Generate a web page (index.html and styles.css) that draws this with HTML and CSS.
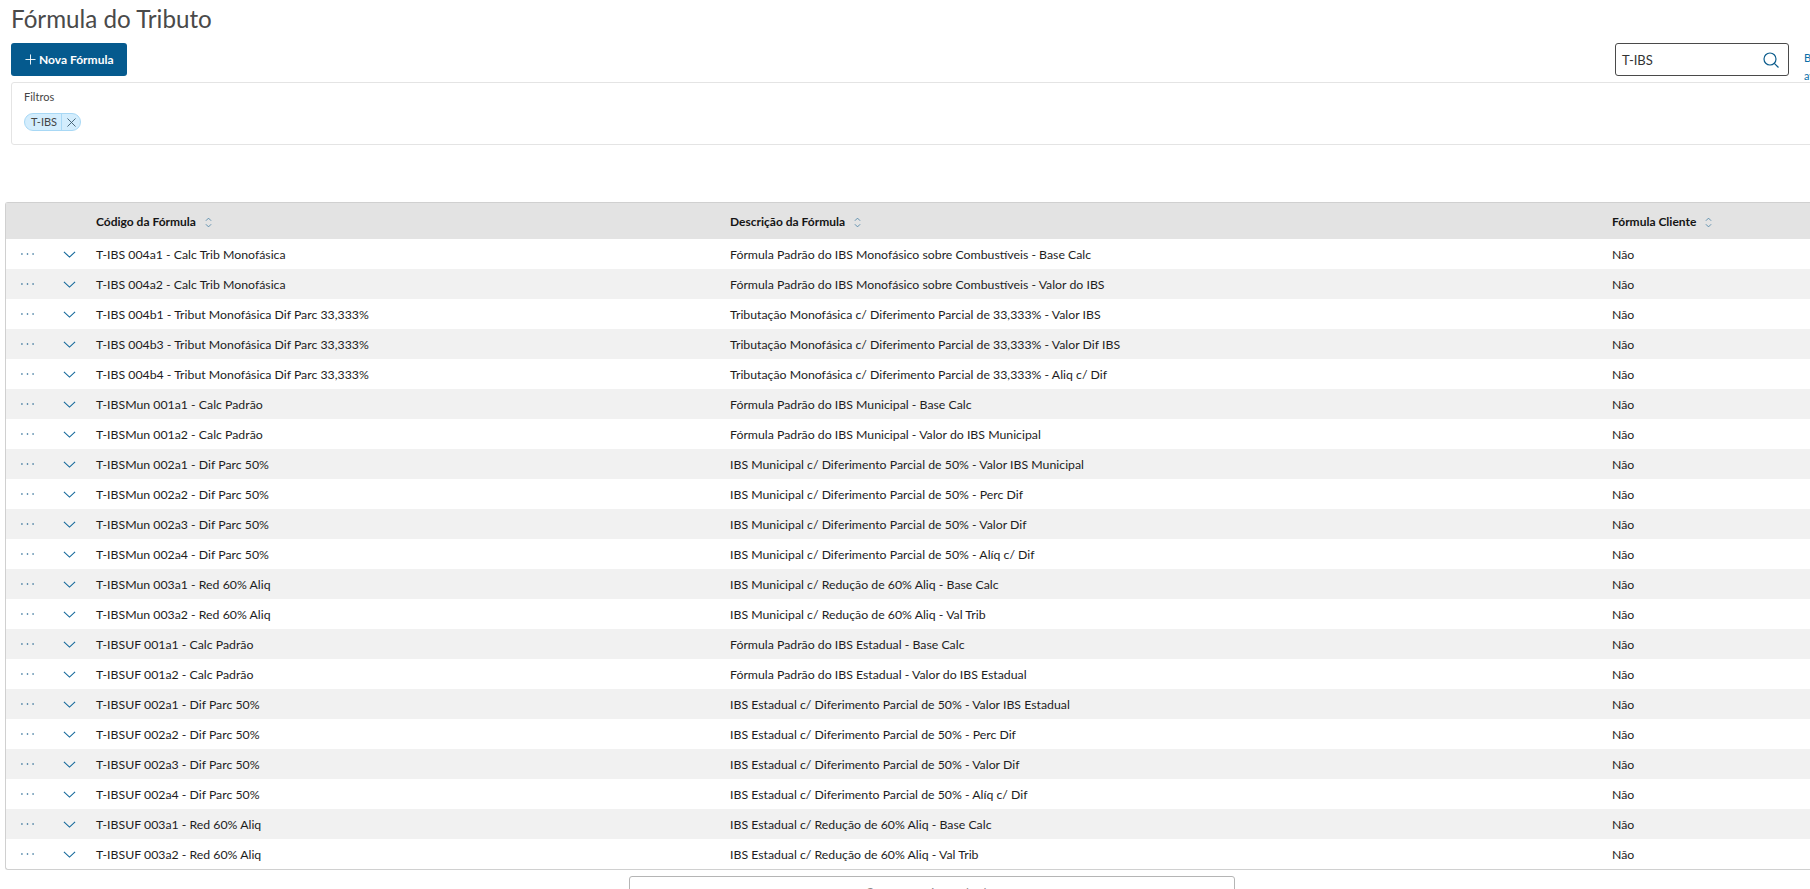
FILE: index.html
```html
<!DOCTYPE html>
<html lang="pt-BR">
<head>
<meta charset="utf-8">
<title>Fórmula do Tributo</title>
<link rel="stylesheet" href="styles.css">
</head>
<body>
<main class="page">
  <header class="head">
    <h1 class="title">Fórmula do Tributo</h1>
    <div class="actions">
      <button class="primary"><svg class="plus" viewBox="0 0 12 12"><path d="M6 .5v11M.5 6h11"/></svg>Nova Fórmula</button>
      <div class="search-wrap">
        <div class="search"><span>T-IBS</span>
          <svg class="lens" viewBox="0 0 16 16"><circle cx="7" cy="7" r="6"/><path d="M11.3 11.3 15.5 15.5"/></svg>
        </div>
        <a class="adv">Busca<br>avançada</a>
      </div>
    </div>
  </header>
  <section class="filters">
    <div class="filters-label">Filtros</div>
    <div class="tag"><span class="tag-text">T-IBS</span><span class="tag-x"><svg viewBox="0 0 10 10"><path d="M.5 .5l9 9M9.5 .5l-9 9"/></svg></span></div>
  </section>
  <section class="table">
    <div class="row thead">
      <div class="c-act"></div><div class="c-exp"></div>
      <div class="c-code">Código da Fórmula<svg class="sort" viewBox="0 0 8 12"><path d="M1 4l3-3 3 3M1 8l3 3 3-3"/></svg></div>
      <div class="c-desc">Descrição da Fórmula<svg class="sort" viewBox="0 0 8 12"><path d="M1 4l3-3 3 3M1 8l3 3 3-3"/></svg></div>
      <div class="c-cli">Fórmula Cliente<svg class="sort" viewBox="0 0 8 12"><path d="M1 4l3-3 3 3M1 8l3 3 3-3"/></svg></div>
    </div>
    <div id="rows"></div>
  </section>
  <div class="more-wrap"><button class="more">Carregar mais resultados</button></div>
</main>
<script src="app.js"></script>
</body>
</html>
```
FILE: app.js
```js
const data = [
["T-IBS 004a1 - Calc Trib Monofásica","Fórmula Padrão do IBS Monofásico sobre Combustíveis - Base Calc"],
["T-IBS 004a2 - Calc Trib Monofásica","Fórmula Padrão do IBS Monofásico sobre Combustíveis - Valor do IBS"],
["T-IBS 004b1 - Tribut Monofásica Dif Parc 33,333%","Tributação Monofásica c/ Diferimento Parcial de 33,333% - Valor IBS"],
["T-IBS 004b3 - Tribut Monofásica Dif Parc 33,333%","Tributação Monofásica c/ Diferimento Parcial de 33,333% - Valor Dif IBS"],
["T-IBS 004b4 - Tribut Monofásica Dif Parc 33,333%","Tributação Monofásica c/ Diferimento Parcial de 33,333% - Aliq c/ Dif"],
["T-IBSMun 001a1 - Calc Padrão","Fórmula Padrão do IBS Municipal - Base Calc"],
["T-IBSMun 001a2 - Calc Padrão","Fórmula Padrão do IBS Municipal - Valor do IBS Municipal"],
["T-IBSMun 002a1 - Dif Parc 50%","IBS Municipal c/ Diferimento Parcial de 50% - Valor IBS Municipal"],
["T-IBSMun 002a2 - Dif Parc 50%","IBS Municipal c/ Diferimento Parcial de 50% - Perc Dif"],
["T-IBSMun 002a3 - Dif Parc 50%","IBS Municipal c/ Diferimento Parcial de 50% - Valor Dif"],
["T-IBSMun 002a4 - Dif Parc 50%","IBS Municipal c/ Diferimento Parcial de 50% - Alíq c/ Dif"],
["T-IBSMun 003a1 - Red 60% Aliq","IBS Municipal c/ Redução de 60% Aliq - Base Calc"],
["T-IBSMun 003a2 - Red 60% Aliq","IBS Municipal c/ Redução de 60% Aliq - Val Trib"],
["T-IBSUF 001a1 - Calc Padrão","Fórmula Padrão do IBS Estadual - Base Calc"],
["T-IBSUF 001a2 - Calc Padrão","Fórmula Padrão do IBS Estadual - Valor do IBS Estadual"],
["T-IBSUF 002a1 - Dif Parc 50%","IBS Estadual c/ Diferimento Parcial de 50% - Valor IBS Estadual"],
["T-IBSUF 002a2 - Dif Parc 50%","IBS Estadual c/ Diferimento Parcial de 50% - Perc Dif"],
["T-IBSUF 002a3 - Dif Parc 50%","IBS Estadual c/ Diferimento Parcial de 50% - Valor Dif"],
["T-IBSUF 002a4 - Dif Parc 50%","IBS Estadual c/ Diferimento Parcial de 50% - Alíq c/ Dif"],
["T-IBSUF 003a1 - Red 60% Aliq","IBS Estadual c/ Redução de 60% Aliq - Base Calc"],
["T-IBSUF 003a2 - Red 60% Aliq","IBS Estadual c/ Redução de 60% Aliq - Val Trib"]
];
document.getElementById("rows").innerHTML = data.map(([a, b]) => `
<div class="row">
  <div class="c-act"><svg class="dots" viewBox="0 0 14 2"><circle cx="1" cy="1" r=".9"/><circle cx="7" cy="1" r=".9"/><circle cx="13" cy="1" r=".9"/></svg></div>
  <div class="c-exp"><svg class="chev" viewBox="0 0 14 7.5"><path d="M1 1l6 5.5 6-5.5"/></svg></div>
  <div class="c-code">${a}</div>
  <div class="c-desc">${b}</div>
  <div class="c-cli">Não</div>
</div>`).join("");
```
FILE: styles.css
```css
html, body { margin: 0; padding: 0; background: #fff; overflow: hidden; height: 889px; }
body { font-family: Lato, "Open Sans", sans-serif; color: #1d1d1d; font-size: 12px; }
.page { width: 1900px; }
.head { padding: 0 0 0 11px; }
.title { margin: 0; height: 43px; font-size: 24.2px; line-height: 38px; font-weight: 400; color: #4a4a4a; }
.actions { display: flex; justify-content: space-between; width: 1853px; height: 33px; }
.primary { display: flex; align-items: center; gap: 3px; height: 33px; width: 116px; padding: 0 0 0 14px; border: 0; border-radius: 3px; background: #055a8e; color: #fff; font: 700 12px Lato, sans-serif; }
.plus { width: 11px; height: 11px; fill: none; stroke: #fff; stroke-width: 1; }
.search-wrap { display: flex; gap: 15px; }
.search { box-sizing: border-box; width: 174px; height: 33px; display: flex; align-items: center; justify-content: space-between; padding: 0 9px 0 6px; border: 1px solid #4a4a4a; border-radius: 3px; font-size: 13px; color: #333; }
.lens { width: 16px; height: 16px; fill: none; stroke: #0b5c8c; stroke-width: 1.2; }
.adv { width: 60px; color: #0b6fa8; font-size: 11px; line-height: 18px; padding-top: 6px; white-space: nowrap; }
.filters { box-sizing: border-box; margin: 6px 0 0 11px; width: 1880px; height: 63px; border: 1px solid #e4e4e4; border-radius: 3px; padding: 6px 0 0 12px; }
.filters-label { font-size: 11px; line-height: 15px; color: #444; }
.tag { display: inline-flex; align-items: center; height: 16px; margin-top: 9px; border: 1px solid #a8d8f5; border-radius: 9px; background: #d3edfd; font-size: 11px; color: #444; }
.tag-text { padding: 0 4px 0 6px; line-height: 16px; border-right: 1px solid #a8d8f5; }
.tag-x { display: flex; padding: 0 4px 0 5px; }
.tag-x svg { width: 9px; height: 9px; fill: none; stroke: #3c5a6e; stroke-width: 1; }
.table { margin: 57px 0 0 5px; width: 1900px; border: 1px solid #d0d0d0; border-right: 0; border-radius: 3px; box-sizing: border-box; }
.row { display: flex; align-items: center; height: 30px; font-size: 12.3px; }
#rows .row:nth-child(even) { background: #f1f1f1; }
.thead { height: 36px; background: #e3e3e3; font-weight: 700; color: #151515; font-size: 12px; }
.c-act { width: 41px; display: flex; padding-left: 15px; box-sizing: border-box; }
.c-exp { width: 49px; display: flex; padding-left: 16px; box-sizing: border-box; }
.c-code { width: 634px; }
.c-desc { width: 882px; }
.c-cli { flex: 1; }
.dots { width: 13px; height: 2px; fill: #1a5f8c; }
.chev { width: 13px; height: 7px; fill: none; stroke: #14689a; stroke-width: 1.2; }
.sort { width: 7px; height: 11px; margin-left: 9px; fill: none; stroke: #4f86a8; stroke-width: 1; vertical-align: -2px; }
.more-wrap { display: flex; width: 1864px; justify-content: center; margin-top: 6px; }
.more { width: 606px; border: 1px solid #b5b5b5; border-radius: 3px; background: #fff; font: 400 12.4px/16px Lato, sans-serif; color: #8a8a8a; padding: 9px 0 15px; }
```
